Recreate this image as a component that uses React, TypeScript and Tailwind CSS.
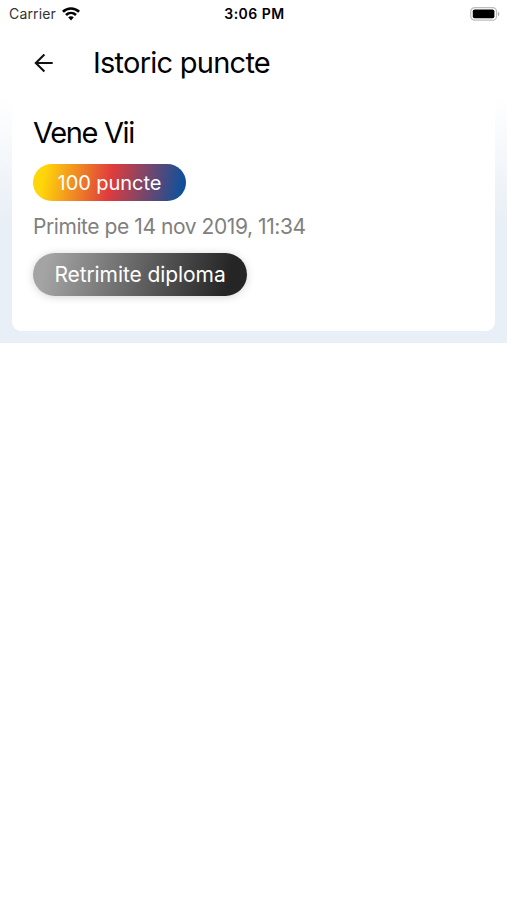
export default function App() {
  return (
    <div className="h-[900px] w-[507px] overflow-hidden bg-white font-['Inter',sans-serif] text-black">
      <header className="grid h-7 grid-cols-3 items-center pr-[7px] pl-[9px]">
        <div className="flex items-center gap-[6px]">
          <span className="text-[14px] leading-none tracking-[0.15px] text-[#333]">Carrier</span>
          <svg className="h-[14px] w-[18px]" viewBox="0 0 18 14" fill="none" stroke="#000" strokeWidth="2.7">
            <path d="M.9 4.8C5.5.4 12.5.4 17.1 4.8" />
            <path d="M4 8c2.9-2.7 7.1-2.7 10 0" />
            <path d="M6.2 10.3c1.5-1.5 4.1-1.5 5.6 0L9 13.4z" fill="#000" stroke="none" />
          </svg>
        </div>
        <span className="text-center text-[14px] leading-none font-semibold tracking-[0.5px] whitespace-nowrap">3:06 PM</span>
        <svg className="h-[14px] w-[30px] justify-self-end" viewBox="0 0 30 14">
          <rect x="0.75" y="0.6" width="25.8" height="12.6" rx="4" fill="#fff" stroke="#bdbdbd" strokeWidth="1.2" />
          <rect x="2.8" y="2.5" width="21.6" height="8.8" rx="1.8" fill="#000" />
          <path d="M28 5v4c1.8-.5 1.8-3.5 0-4z" fill="#aaa" />
        </svg>
      </header>
      <nav className="flex h-[69px] items-center pl-[34px]">
        <svg className="h-5 w-5" viewBox="0 0 20 20" fill="none" stroke="#111" strokeWidth="2.1">
          <path d="M18.7 10H2.2M10.4 1.4 1.8 10l8.6 8.6" />
        </svg>
        <h1 className="ml-[39px] text-[29px] leading-none tracking-[-0.75px] whitespace-nowrap">Istoric puncte</h1>
      </nav>
      <main className="h-[246px] bg-linear-to-b from-white to-[#e9eff6] to-50% px-3 pb-3">
        <section className="flex h-full w-[483px] flex-col items-start rounded-[9px] bg-white pt-[20px] pl-[21px]">
          <h2 className="text-[29px] leading-8 tracking-[-1.35px]">Vene Vii</h2>
          <div className="mt-[15px] flex h-[37px] w-[153px] items-center justify-center rounded-full bg-linear-[100deg,#ffd60a_8%,#e03c3c_50%,#10509a_96%] text-[20px] text-white">
            <span className="tracking-[-0.05px]">100 puncte</span>
          </div>
          <p className="mt-[12px] text-[21px] leading-7 tracking-[-0.43px] whitespace-nowrap text-[#808080]">Primite pe 14 nov 2019, 11:34</p>
          <button className="mt-[12px] h-[43px] w-[214px] rounded-full bg-linear-[104deg,#a4a4a4_7%,#252525_90%] text-[21px] tracking-[-0.08px] whitespace-nowrap text-white shadow-[0_1px_9px_#0000002b]">Retrimite diploma</button>
        </section>
      </main>
    </div>
  );
}
